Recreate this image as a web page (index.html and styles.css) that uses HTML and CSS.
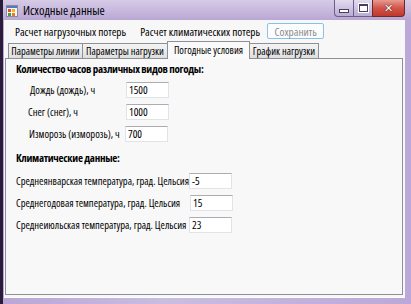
FILE: index.html
```html
<!DOCTYPE html>
<html>
<head>
<meta charset="utf-8">
<link rel="stylesheet" href="styles.css">
</head>
<body>
<div class="window">
  <div class="titlebar">
    <svg class="app-icon" width="12" height="12" viewBox="0 0 12 12">
      <rect x="0.5" y="0.5" width="11" height="11" fill="#f4f4f4" stroke="#8a8a9a"/>
      <rect x="1" y="1" width="10" height="2" fill="#4a7cc8"/>
      <rect x="2" y="4" width="3" height="3" fill="#e84a2a"/>
      <rect x="6" y="4" width="3" height="3" fill="#f2b320"/>
      <rect x="2" y="8" width="3" height="3" fill="#3aa04a"/>
      <rect x="6" y="8" width="3" height="3" fill="#e87a20"/>
    </svg>
    <span class="title">Исходные данные</span>
    <div class="controls">
      <div class="ctl min"><span class="min-bar"></span></div>
      <div class="ctl max"><span class="max-box"></span></div>
      <div class="ctl close"><span class="x">✕</span></div>
    </div>
  </div>
  <div class="client">
    <div class="menu">
      <span class="menu-item">Расчет нагрузочных потерь</span>
      <span class="menu-item">Расчет климатических потерь</span>
      <span class="save-btn">Сохранить</span>
    </div>
    <div class="tabs">
      <span class="tab t1">Параметры линии</span>
      <span class="tab t2">Параметры нагрузки</span>
      <span class="tab t3 active">Погодные условия</span>
      <span class="tab t4">График нагрузки</span>
    </div>
    <div class="panel">
      <div class="group-title">Количество часов различных видов погоды:</div>
      <div class="rows weather">
        <span class="lbl l1">Дождь (дождь), ч</span><span class="field">1500</span>
        <span class="lbl l2">Снег (снег), ч</span><span class="field">1000</span>
        <span class="lbl l3">Изморозь (изморозь), ч</span><span class="field f3">700</span>
      </div>
      <div class="group-title second">Климатические данные:</div>
      <div class="rows climate">
        <span class="lbl">Среднеянварская температура, град. Цельсия</span><span class="field">-5</span>
        <span class="lbl">Среднегодовая температура, град. Цельсия</span><span class="field f5">15</span>
        <span class="lbl">Среднеиюльская температура, град. Цельсия</span><span class="field">23</span>
      </div>
    </div>
  </div>
</div>
</body>
</html>
```
FILE: styles.css
```css
html, body {
  margin: 0;
  padding: 0;
}
body {
  width: 411px;
  height: 304px;
  overflow: hidden;
  font-family: "Open Sans", "Liberation Sans", Arial, sans-serif;
  font-stretch: 75%;
  color: #000;
}
.window {
  width: 411px;
  height: 304px;
  box-sizing: border-box;
  display: flex;
  flex-direction: column;
  background: linear-gradient(90deg, #b9a6d6 0%, #c9bde0 40%, #bba8d8 100%);
  border-left: 3px solid #2a1d3a;
}
.titlebar {
  height: 20px;
  display: flex;
  align-items: center;
  background: linear-gradient(180deg, #d6cbe6 0%, #c5b6dc 60%, #b9a7d4 100%);
}
.app-icon {
  margin-left: 3px;
  margin-top: 1px;
}
.title {
  margin-left: 5px;
  font-size: 12.5px;
  color: #000;
  margin-top: 1px;
}
.controls {
  margin-left: auto;
  margin-right: 6px;
  align-self: flex-start;
  display: flex;
  height: 17px;
}
.ctl {
  height: 17px;
  box-sizing: border-box;
  border: 1px solid #6d5f88;
  border-top: none;
  display: flex;
  align-items: center;
  justify-content: center;
}
.min, .max {
  width: 19px;
  background: linear-gradient(180deg, #e2dbee 0%, #cfc4e2 50%, #b9acd3 100%);
}
.min {
  border-bottom-left-radius: 4px;
  border-right: none;
}
.max {
  border-right: none;
}
.min-bar {
  width: 8px;
  height: 2px;
  background: #fff;
  border: 1px solid #4a3d62;
  margin-top: 6px;
}
.max-box {
  width: 7px;
  height: 5px;
  border: 1px solid #4a3d62;
  border-top-width: 2px;
  background: #fff;
  box-shadow: 0 0 0 1px #fff;
}
.close {
  width: 33px;
  border-bottom-right-radius: 4px;
  background: linear-gradient(180deg, #e89a8e 0%, #d2544a 50%, #c0392c 100%);
  border-color: #6d2a2a;
}
.close .x {
  color: #fff;
  font-family: "DejaVu Sans", sans-serif;
  font-stretch: normal;
  font-weight: bold;
  font-size: 11px;
  line-height: 1;
  text-shadow: 0 0 1px #4a1a1a, 0 0 1px #4a1a1a;
}
.client {
  flex: 1;
  margin: 0 6px 6px 1px;
  background: #f7f7f7;
  display: flex;
  flex-direction: column;
  padding: 0 2px 2px 1px;
  border-bottom: 1px solid #fff;
}
.menu {
  height: 18px;
  margin-top: 2px;
  display: flex;
  align-items: center;
  font-size: 11.3px;
}
.menu-item {
  margin-left: 10px;
  white-space: nowrap;
}
.menu-item + .menu-item {
  margin-left: 14px;
}
.save-btn {
  margin-left: 7px;
  width: 55px;
  height: 14px;
  border: 1px solid #8cc1e6;
  border-radius: 2px;
  background: #fafcfe;
  color: #8d8d8d;
  display: flex;
  align-items: center;
  justify-content: center;
  font-size: 11.3px;
}
.tabs {
  display: flex;
  align-items: flex-end;
  height: 18px;
  padding-left: 3px;
  position: relative;
  z-index: 1;
}
.tab {
  height: 15px;
  box-sizing: border-box;
  border: 1px solid #8e9098;
  border-bottom: none;
  background: linear-gradient(180deg, #f3f3f3 0%, #ebebeb 50%, #dedede 100%);
  font-size: 10.4px;
  display: flex;
  align-items: center;
  justify-content: center;
  margin-right: -1px;
  white-space: nowrap;
}
.t1 { width: 75px; }
.t2 { width: 86px; }
.t3 { width: 83px; }
.t4 { width: 70px; }
.tab.active {
  height: 18px;
  background: #fafafa;
  padding-bottom: 2px;
  margin-bottom: -1px;
  z-index: 2;
}
.panel {
  flex: 1;
  border: 1px solid #8e9098;
  background: #f8f8f8;
  padding: 3px 0 0 10px;
  font-size: 10.5px;
}
.group-title {
  font-weight: bold;
  height: 14px;
  line-height: 14px;
  font-size: 11px;
  letter-spacing: -0.3px;
}
.group-title.second {
  margin-top: 9px;
}
.rows {
  display: grid;
  row-gap: 6px;
  align-items: center;
}
.weather {
  margin-top: 6px;
  grid-template-columns: 110px 43px;
}
.climate {
  margin-top: 8px;
  grid-template-columns: 173px 43px;
}
.lbl {
  white-space: nowrap;
  line-height: 16px;
}
.l1 { padding-left: 14px; }
.l2 { padding-left: 12px; }
.l3 { padding-left: 13px; }
.field {
  width: 43px;
  height: 16px;
  box-sizing: border-box;
  background: #fff;
  border: 1px solid #dfe3ea;
  border-top-color: #abadb3;
  padding-left: 2px;
  font-size: 11px;
  line-height: 14px;
}
.f3 {
  margin-left: -1px;
}
.f5 {
  margin-left: 1px;
}
```
